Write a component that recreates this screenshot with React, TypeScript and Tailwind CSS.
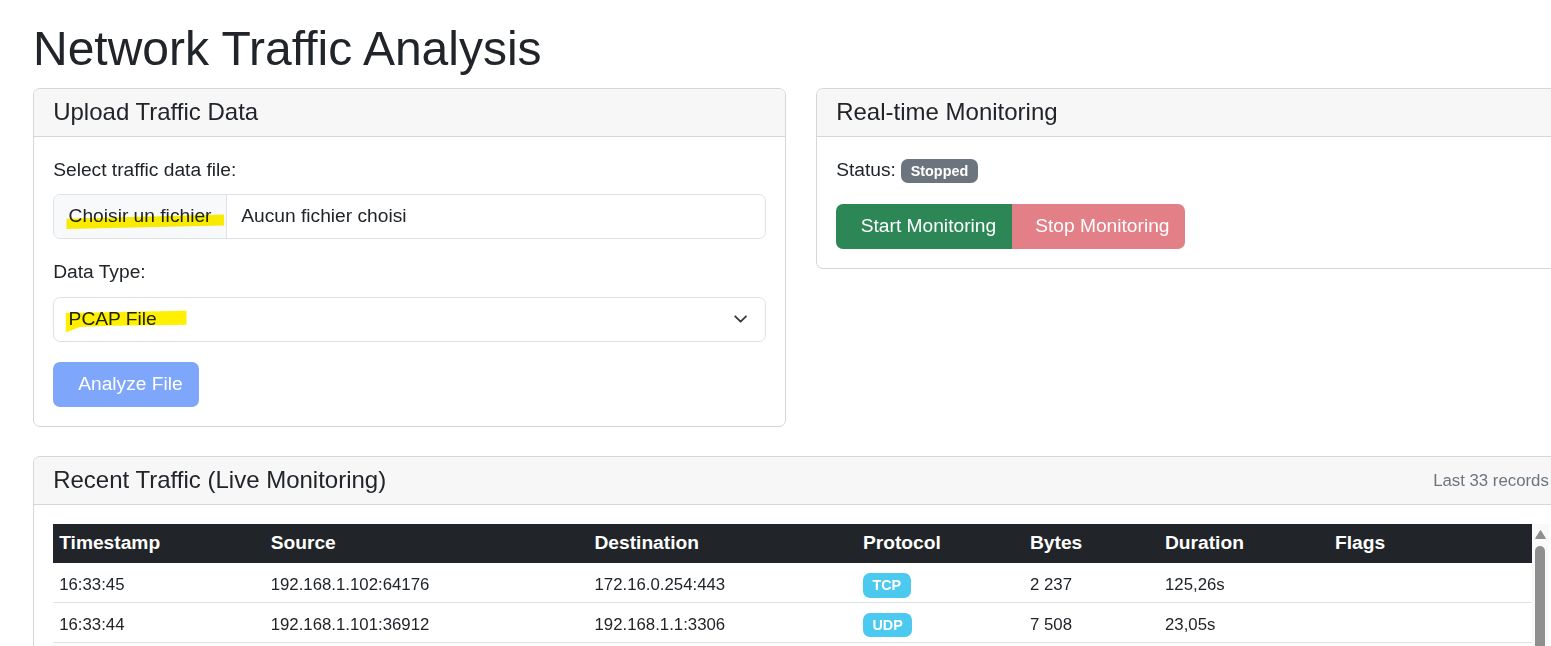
import React from "react";

type Row = {
  time: string;
  src: string;
  dst: string;
  proto: string;
  bytes: string;
  dur: string;
  flags: string;
};

function buildRows(): Row[] {
  const rows: Row[] = [
    { time: "16:33:45", src: "192.168.1.102:64176", dst: "172.16.0.254:443", proto: "TCP", bytes: "2 237", dur: "125,26s", flags: "" },
    { time: "16:33:44", src: "192.168.1.101:36912", dst: "192.168.1.1:3306", proto: "UDP", bytes: "7 508", dur: "23,05s", flags: "" },
  ];
  let seed = 7;
  const rnd = (n: number) => {
    seed = (seed * 1103515245 + 12345) % 2147483648;
    return seed % n;
  };
  const srcs = ["192.168.1.100", "192.168.1.101", "192.168.1.102", "192.168.1.103", "10.0.0.15"];
  const dsts = ["172.16.0.254", "192.168.1.1", "8.8.8.8", "10.0.0.1", "172.16.0.10"];
  const ports = ["443", "80", "53", "3306", "22", "8080"];
  const protos = ["TCP", "UDP", "TCP", "TCP", "UDP"];
  for (let i = 2; i < 33; i++) {
    const sec = 45 - i;
    const m = sec < 0 ? 32 : 33;
    const s = sec < 0 ? 60 + sec : sec;
    const b = 100 + rnd(9800);
    const bytes = b >= 1000 ? `${Math.floor(b / 1000)} ${String(b % 1000).padStart(3, "0")}` : String(b);
    rows.push({
      time: `16:${m}:${String(s).padStart(2, "0")}`,
      src: `${srcs[rnd(srcs.length)]}:${30000 + rnd(35000)}`,
      dst: `${dsts[rnd(dsts.length)]}:${ports[rnd(ports.length)]}`,
      proto: protos[rnd(protos.length)],
      bytes,
      dur: `${rnd(150)},${String(rnd(100)).padStart(2, "0")}s`,
      flags: "",
    });
  }
  return rows;
}

const rows = buildRows();

function Card({
  title,
  right,
  className,
  children,
}: {
  title: string;
  right?: React.ReactNode;
  className?: string;
  children: React.ReactNode;
}) {
  return (
    <div className={`rounded-[7px] border border-[#d6d6d6] bg-white ${className ?? ""}`}>
      <div className="flex h-[48px] items-center justify-between rounded-t-[6px] border-b border-[#d6d6d6] bg-[#f7f7f7] px-[19.2px]">
        <h5 className="text-[24px] font-normal leading-[1.2]">{title}</h5>
        {right}
      </div>
      <div className="p-[19.2px]">{children}</div>
    </div>
  );
}

export default function App() {
  return (
    <div className="h-[646px] w-full overflow-hidden bg-white font-['Liberation_Sans',Arial,Helvetica,sans-serif] text-[19.2px] leading-[1.5] text-[#212529]">
      <div className="ml-[33px] w-[1536px] pt-[20px]">
        <h1 className="mb-[10px] text-[48px] font-normal leading-[57.6px]">Network Traffic Analysis</h1>

        <div className="grid grid-cols-2 gap-[30px]">
          <Card title="Upload Traffic Data">
            <label className="mb-[9.6px] block">Select traffic data file:</label>
            <div className="relative mb-[19.2px] flex h-[45px] overflow-hidden rounded-[7px] border border-[#dee2e6]">
              <span className="flex items-center whitespace-nowrap border-r border-[#dee2e6] bg-[#f8f9fa] px-[14.4px]">Choisir un fichier</span>
              <span className="flex items-center whitespace-nowrap px-[14.4px]">Aucun fichier choisi</span>
              <svg className="pointer-events-none absolute left-0 top-0 mix-blend-multiply" width="300" height="45">
                <polygon points="12.5,23.7 169.8,19.4 170.3,30.4 12.5,33.9" fill="#fff000" />
              </svg>
            </div>

            <label className="mb-[9.6px] block">Data Type:</label>
            <div className="relative mb-[20px]">
              <select
                defaultValue="pcap"
                className="h-[45px] w-full appearance-none rounded-[7px] border border-[#dee2e6] bg-white pl-[14.4px] pr-[40px] text-[19.2px] text-[#212529] outline-none"
              >
                <option value="pcap">PCAP File</option>
                <option value="csv">CSV File</option>
                <option value="json">JSON File</option>
              </select>
              <svg
                className="pointer-events-none absolute right-[15.4px] top-1/2 -translate-y-1/2"
                width="19.2"
                height="14.4"
                viewBox="0 0 16 16"
              >
                <path d="m2 5 6 6 6-6" fill="none" stroke="#343a40" strokeLinecap="round" strokeLinejoin="round" strokeWidth="2" />
              </svg>
              <svg className="pointer-events-none absolute left-0 top-0 mix-blend-multiply" width="200" height="45">
                <polygon points="12.8,16.1 133.5,13.8 133.5,27.8 56.8,28.8 26.8,30.1 12.8,35.5" fill="#fff000" />
              </svg>
            </div>

            <button className="flex h-[45px] items-center whitespace-nowrap rounded-[7px] bg-[#7ea6fa] pl-[25px] pr-[16px] text-[19.2px] text-white">
              Analyze File
            </button>
          </Card>

          <Card title="Real-time Monitoring" className="self-start">
            <p className="mb-[19.2px]">
              Status:{" "}
              <span className="inline-block rounded-[7px] bg-[#6c757d] px-[9.4px] py-[5px] align-baseline text-[14.4px] font-bold leading-none text-white">
                Stopped
              </span>
            </p>
            <div className="inline-flex">
              <button className="flex h-[45px] items-center whitespace-nowrap rounded-l-[7px] bg-[#2c8656] pl-[24.5px] pr-[15.5px] text-[19.2px] text-white">
                Start Monitoring
              </button>
              <button className="flex h-[45px] items-center whitespace-nowrap rounded-r-[7px] bg-[#e38087] pl-[23.5px] pr-[15px] text-[19.2px] text-white">
                Stop Monitoring
              </button>
            </div>
          </Card>
        </div>

        <Card
          title="Recent Traffic (Live Monitoring)"
          className="mt-[28.8px]"
          right={<small className="text-[16.8px] text-[#6c757d]">Last 33 records</small>}
        >
          <div className="flex max-h-[400px] overflow-hidden">
            <div className="min-w-0 flex-1">
              <table className="w-full table-fixed border-collapse">
                <thead>
                  <tr className="text-left text-[19.2px] font-bold text-white">
                    <th className="sticky top-0 h-[39.5px] w-[211.5px] bg-[#212529] px-[6px] align-middle">Timestamp</th>
                    <th className="sticky top-0 h-[39.5px] w-[323.8px] bg-[#212529] px-[6px] align-middle">Source</th>
                    <th className="sticky top-0 h-[39.5px] w-[268.5px] bg-[#212529] px-[6px] align-middle">Destination</th>
                    <th className="sticky top-0 h-[39.5px] w-[167px] bg-[#212529] px-[6px] align-middle">Protocol</th>
                    <th className="sticky top-0 h-[39.5px] w-[135px] bg-[#212529] px-[6px] align-middle">Bytes</th>
                    <th className="sticky top-0 h-[39.5px] w-[170px] bg-[#212529] px-[6px] align-middle">Duration</th>
                    <th className="sticky top-0 h-[39.5px] bg-[#212529] px-[6px] align-middle">Flags</th>
                  </tr>
                </thead>
                <tbody className="text-[16.8px]">
                  {rows.map((r, i) => (
                    <tr key={i} className="border-b border-[#dee2e6]">
                      <td className="h-[39.5px] px-[6px] pt-[4px] align-middle">{r.time}</td>
                      <td className="h-[39.5px] px-[6px] pt-[4px] align-middle">{r.src}</td>
                      <td className="h-[39.5px] px-[6px] pt-[4px] align-middle">{r.dst}</td>
                      <td className="h-[39.5px] px-[6px] pt-[4px] align-middle">
                        <span className="inline-block rounded-[7px] bg-[#4cc9ef] px-[9.4px] py-[5px] text-[14.4px] font-bold leading-none text-white">
                          {r.proto}
                        </span>
                      </td>
                      <td className="h-[39.5px] px-[6px] pt-[4px] align-middle">{r.bytes}</td>
                      <td className="h-[39.5px] px-[6px] pt-[4px] align-middle">{r.dur}</td>
                      <td className="h-[39.5px] px-[6px] pt-[4px] align-middle">{r.flags}</td>
                    </tr>
                  ))}
                </tbody>
              </table>
            </div>
            {/* scrollbar */}
            <div className="flex w-[17px] shrink-0 flex-col items-center bg-[#f9f9f9]">
              <svg className="mt-[6px] shrink-0" width="11" height="9" viewBox="0 0 11 9">
                <path d="M5.5 0.5 L10.5 8.5 L0.5 8.5 Z" fill="#8f8f8f" stroke="#8f8f8f" strokeLinejoin="round" strokeWidth="1" />
              </svg>
              <div className="mt-[7px] h-[240px] w-[10px] shrink-0 rounded-full bg-[#8f8f8f]" />
            </div>
          </div>
        </Card>
      </div>
    </div>
  );
}
